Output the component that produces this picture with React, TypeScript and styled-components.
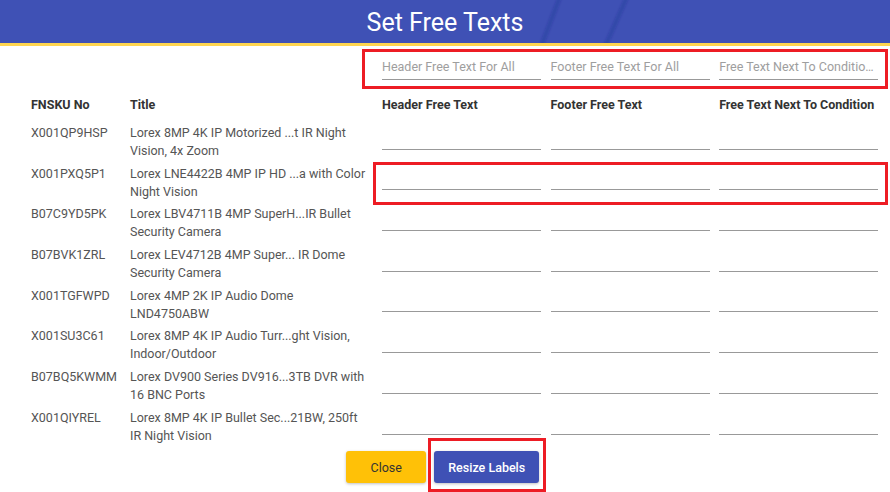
import React from "react";
import styled, { createGlobalStyle } from "styled-components";

const Global = createGlobalStyle`
  html, body { margin: 0; padding: 0; background: #fff; }
  body { font-family: Roboto, "Noto Sans", Arial, sans-serif; }
  * { box-sizing: border-box; }
`;

const Page = styled.div`
  position: relative;
  width: 890px;
  height: 492px;
  overflow: hidden;
  background: #fff;
`;

const Header = styled.header`
  position: relative;
  height: 46px;
  background: #3f51b5;
  border-bottom: 3px solid #ffd54f;
  display: flex;
  align-items: center;
  justify-content: center;
  overflow: hidden;
`;

const Stripes = styled.svg`
  position: absolute;
  left: 0;
  top: 0;
`;

const Title = styled.h1`
  position: relative;
  margin: 0;
  padding-top: 1px;
  color: #fff;
  font-family: Roboto, sans-serif;
  font-weight: 400;
  font-size: 25px;
`;

const Body = styled.div`
  padding: 0 11.5px 0 31px;
`;

const Grid = styled.div`
  display: grid;
  grid-template-columns: 99px 242.7px repeat(3, 168.6px);
`;

const AllRow = styled.div`
  grid-column: 3 / 6;
  display: grid;
  grid-template-columns: repeat(3, 159.3px);
  column-gap: 9.3px;
  margin-left: 9.3px;
  height: 43px;
  padding-top: 10px;
`;

const AllInput = styled.div`
  height: 24px;
  border-bottom: 1px solid #999;
  font-size: 12.5px;
  color: #9e9e9e;
  line-height: 22px;
  white-space: nowrap;
  overflow: hidden;
  text-overflow: ellipsis;
  padding-right: 2px;
`;

const HeadCell = styled.div<{ $input?: boolean }>`
  height: 35px;
  display: flex;
  align-items: center;
  padding-bottom: 5px;
  font-size: 12.5px;
  font-weight: 700;
  color: #333;
  white-space: nowrap;
  margin-left: ${(p) => (p.$input ? "9.3px" : "0")};
`;

const Row = styled.div`
  display: contents;
`;

const TextCell = styled.div`
  height: 40.7px;
  font-size: 12.5px;
  line-height: 18px;
  color: #555;
  white-space: nowrap;
`;

const InputCell = styled.div`
  height: 40.7px;
  margin-left: 9.3px;
  display: flex;
  align-items: flex-end;
  padding-bottom: 15px;
`;

const Underline = styled.div`
  width: 100%;
  border-bottom: 1px solid #999;
`;

const Footer = styled.div`
  display: flex;
  justify-content: center;
  gap: 8px;
  padding-top: 1.5px;
  padding-right: 24px;
`;

const Button = styled.button<{ $variant: "close" | "primary" }>`
  height: 32px;
  border: none;
  border-radius: 3px;
  font-family: Roboto, sans-serif;
  font-size: 12.5px;
  font-weight: ${(p) => (p.$variant === "primary" ? 500 : 400)};
  padding: 0;
  width: ${(p) => (p.$variant === "primary" ? "105px" : "80px")};
  background: ${(p) => (p.$variant === "primary" ? "#3f51b5" : "#ffc107")};
  color: ${(p) => (p.$variant === "primary" ? "#fff" : "#333")};
  box-shadow: 0 1px 3px rgba(0, 0, 0, 0.25);
`;

const Mark = styled.div<{ $x: number; $y: number; $w: number; $h: number }>`
  position: absolute;
  left: ${(p) => p.$x}px;
  top: ${(p) => p.$y}px;
  width: ${(p) => p.$w}px;
  height: ${(p) => p.$h}px;
  border: 3px solid #ed1c24;
  pointer-events: none;
`;

const rows: [string, string, string][] = [
  ["X001QP9HSP", "Lorex 8MP 4K IP Motorized ...t IR Night", "Vision, 4x Zoom"],
  ["X001PXQ5P1", "Lorex LNE4422B 4MP IP HD ...a with Color", "Night Vision"],
  ["B07C9YD5PK", "Lorex LBV4711B 4MP SuperH...IR Bullet", "Security Camera"],
  ["B07BVK1ZRL", "Lorex LEV4712B 4MP Super... IR Dome", "Security Camera"],
  ["X001TGFWPD", "Lorex 4MP 2K IP Audio Dome", "LND4750ABW"],
  ["X001SU3C61", "Lorex 8MP 4K IP Audio Turr...ght Vision,", "Indoor/Outdoor"],
  ["B07BQ5KWMM", "Lorex DV900 Series DV916...3TB DVR with", "16 BNC Ports"],
  ["X001QIYREL", "Lorex 8MP 4K IP Bullet Sec...21BW, 250ft", "IR Night Vision"],
];

export default function App() {
  return (
    <Page>
      <Global />
      <Header>
        <Stripes width="890" height="46" viewBox="0 0 890 46">
          <defs>
            <filter id="soft" x="-20%" y="-20%" width="140%" height="140%">
              <feGaussianBlur stdDeviation="1.3" />
            </filter>
          </defs>
          <g filter="url(#soft)" fill="#1a237e" fillOpacity="0.2">
            <polygon points="557,-2 562,-2 543,48 538,48" />
            <polygon points="624,-2 629,-2 607,48 602,48" />
          </g>
        </Stripes>
        <Title>Set Free Texts</Title>
      </Header>
      <Body>
        <Grid>
          <AllRow>
            <AllInput>Header Free Text For All</AllInput>
            <AllInput>Footer Free Text For All</AllInput>
            <AllInput>Free Text Next To Condition Text For All</AllInput>
          </AllRow>
          <HeadCell>FNSKU No</HeadCell>
          <HeadCell>Title</HeadCell>
          <HeadCell $input>Header Free Text</HeadCell>
          <HeadCell $input>Footer Free Text</HeadCell>
          <HeadCell $input>Free Text Next To Condition</HeadCell>
          {rows.map(([sku, l1, l2]) => (
            <Row key={sku}>
              <TextCell>{sku}</TextCell>
              <TextCell>
                {l1}
                <br />
                {l2}
              </TextCell>
              <InputCell>
                <Underline />
              </InputCell>
              <InputCell>
                <Underline />
              </InputCell>
              <InputCell>
                <Underline />
              </InputCell>
            </Row>
          ))}
        </Grid>
        <Footer>
          <Button $variant="close">Close</Button>
          <Button $variant="primary">Resize Labels</Button>
        </Footer>
      </Body>
      <Mark $x={362} $y={49} $w={526} $h={40} />
      <Mark $x={373} $y={162} $w={515} $h={43} />
      <Mark $x={428} $y={438} $w={118} $h={54} />
    </Page>
  );
}
